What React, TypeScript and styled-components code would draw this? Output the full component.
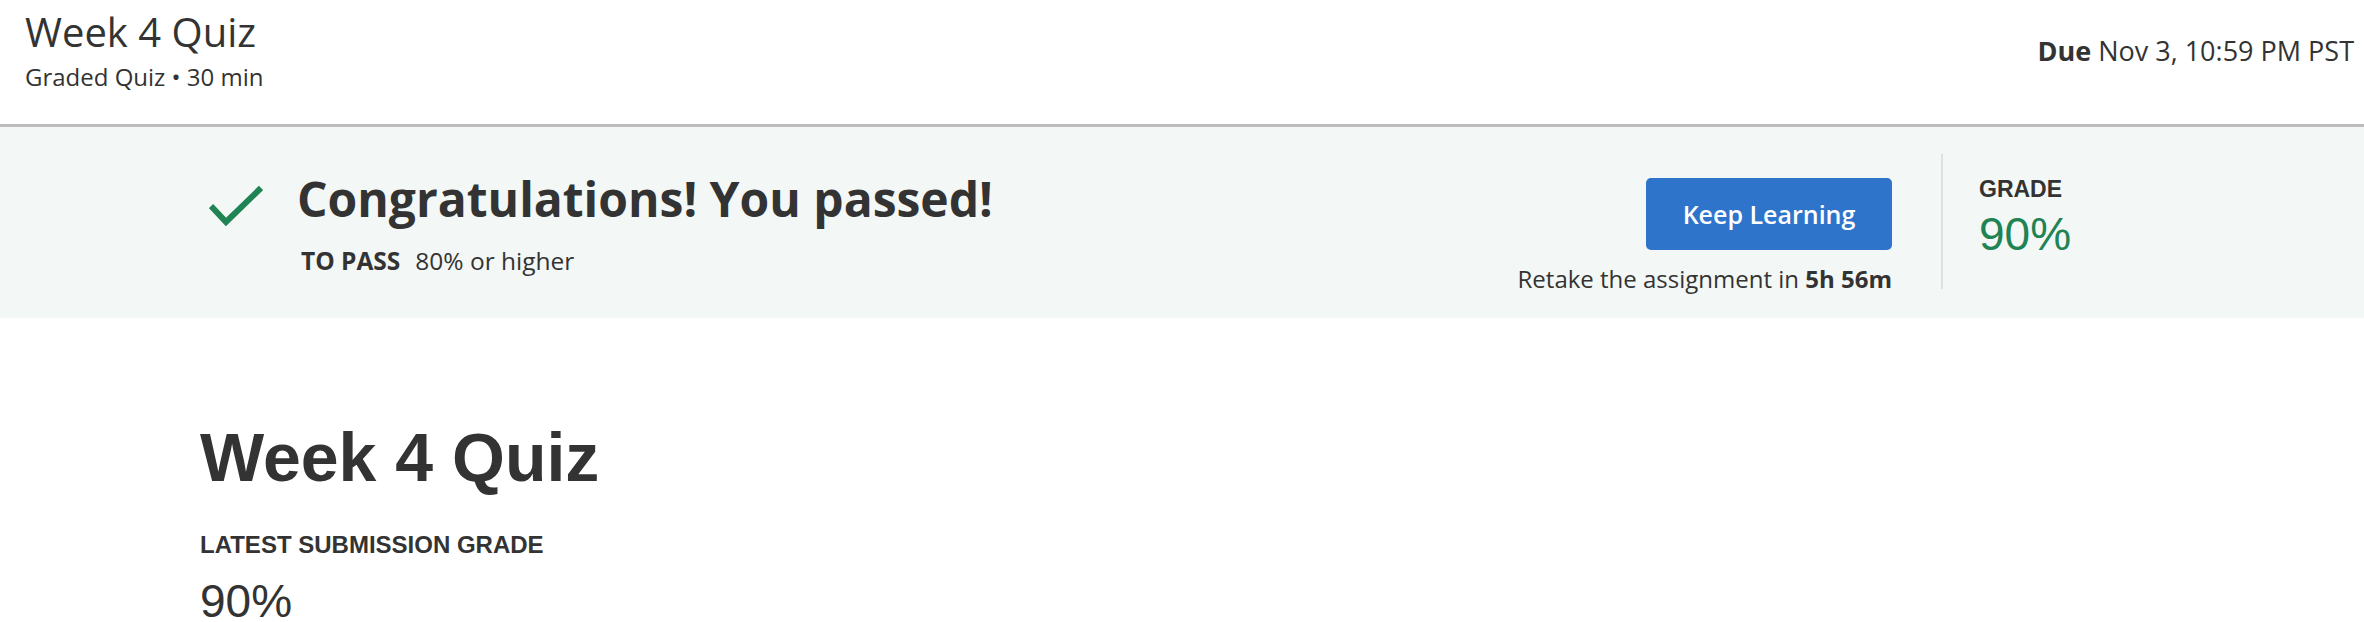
import React from 'react'
import styled, { createGlobalStyle } from 'styled-components'

const GlobalStyle = createGlobalStyle`
  body {
    margin: 0;
    background: #ffffff;
    font-family: "Open Sans", "DejaVu Sans", sans-serif;
    color: #333333;
  }
`

const CheckIcon = () => (
  <svg width="54" height="42" viewBox="0 0 54 42" fill="none">
    <polyline points="2,21 17,37 52,3" stroke="#1f8354" strokeWidth="6" strokeLinecap="butt" strokeLinejoin="miter" />
  </svg>
)

const App = () => {
  return (
    <Page>
      <GlobalStyle />
      <Header>
        <TitleBlock>
          <HeaderTitle>Week 4 Quiz</HeaderTitle>
          <HeaderSub>Graded Quiz • 30 min</HeaderSub>
        </TitleBlock>
        <Due><b>Due</b> Nov 3, 10:59 PM PST</Due>
      </Header>

      <Banner>
        <BannerInner>
          <PassGroup>
            <IconWrap>
              <CheckIcon />
            </IconWrap>
            <PassText>
              <Congrats>Congratulations! You passed!</Congrats>
              <ToPass>
                <b>TO PASS</b>
                <span>80% or higher</span>
              </ToPass>
            </PassText>
          </PassGroup>
          <ActionCol>
            <KeepButton>Keep Learning</KeepButton>
            <Retake>Retake the assignment in <b>5h 56m</b></Retake>
          </ActionCol>
          <Divider />
          <GradeCol>
            <Label size="23px">GRADE</Label>
            <Score color="#1f8354">90%</Score>
          </GradeCol>
        </BannerInner>
      </Banner>

      <Main>
        <BigTitle>Week 4 Quiz</BigTitle>
        <Label size="24px">LATEST SUBMISSION GRADE</Label>
        <Score color="#333333" top="17px">90%</Score>
      </Main>
    </Page>
  )
}

export default App

const Page = styled.div`
width: 100%;
height: 622px;
overflow: hidden;
`
const Header = styled.div`
display: flex;
justify-content: space-between;
align-items: flex-start;
height: 127px;
padding: 8px 10px 0 25px;
box-sizing: border-box;
border-bottom: 3px solid #bdbdbd;
`
const TitleBlock = styled.div`
display: flex;
flex-direction: column;
`
const HeaderTitle = styled.div`
font-size: 40px;
line-height: 48px;
font-weight: 400;
color: #333333;
`
const HeaderSub = styled.div`
font-size: 24px;
line-height: 32px;
margin-top: 5px;
color: #333333;
`
const Due = styled.div`
font-size: 27px;
line-height: 36px;
margin-top: 25px;
color: #333333;
b {
  font-weight: 700;
}
`
const Banner = styled.div`
background-color: #f3f8f6;
padding: 27px 0 29px;
`
const BannerInner = styled.div`
width: 1964px;
height: 135px;
margin: 0 auto;
display: flex;
align-items: flex-start;
`
const PassGroup = styled.div`
flex: 1;
display: flex;
align-items: flex-start;
`
const IconWrap = styled.div`
margin: 31px 0 0 9px;
width: 54px;
height: 42px;
`
const PassText = styled.div`
margin: 15px 0 0 34px;
display: flex;
flex-direction: column;
`
const Congrats = styled.div`
font-size: 48px;
line-height: 60px;
font-weight: 700;
color: #333333;
`
const ToPass = styled.div`
margin-top: 17px;
font-size: 24.5px;
line-height: 30px;
display: flex;
gap: 15px;
padding-left: 4px;
b {
  font-weight: 700;
}
`
const ActionCol = styled.div`
display: flex;
flex-direction: column;
align-items: flex-end;
padding-top: 24px;
margin-right: 49px;
`
const KeepButton = styled.button`
width: 246px;
height: 72px;
border: none;
border-radius: 5px;
background-color: #2f74cb;
color: #ffffff;
font-family: "Open Sans", sans-serif;
font-size: 25px;
font-weight: 600;
cursor: pointer;
`
const Retake = styled.div`
margin-top: 14px;
font-size: 24px;
line-height: 30px;
color: #333333;
b {
  font-weight: 700;
}
`
const Divider = styled.div`
width: 2px;
align-self: stretch;
background-color: #e0e0e0;
`
const GradeCol = styled.div`
width: 221px;
box-sizing: border-box;
padding: 22px 0 0 36px;
display: flex;
flex-direction: column;
`
const Label = styled.div<{ size: string }>`
font-family: "Liberation Sans", Arial, sans-serif;
font-weight: 700;
font-size: ${p => p.size};
line-height: 27px;
color: #333333;
`
const Score = styled.div<{ color: string; top?: string }>`
font-family: "Liberation Sans", Arial, sans-serif;
font-weight: 400;
font-size: 46px;
line-height: 52px;
margin-top: ${p => p.top || '5px'};
color: ${p => p.color};
`
const Main = styled.div`
width: 1964px;
margin: 0 auto;
padding-top: 99px;
display: flex;
flex-direction: column;
`
const BigTitle = styled.div`
font-family: "Liberation Sans", Arial, sans-serif;
font-weight: 700;
font-size: 68px;
line-height: 80px;
color: #333333;
margin-bottom: 34px;
`
